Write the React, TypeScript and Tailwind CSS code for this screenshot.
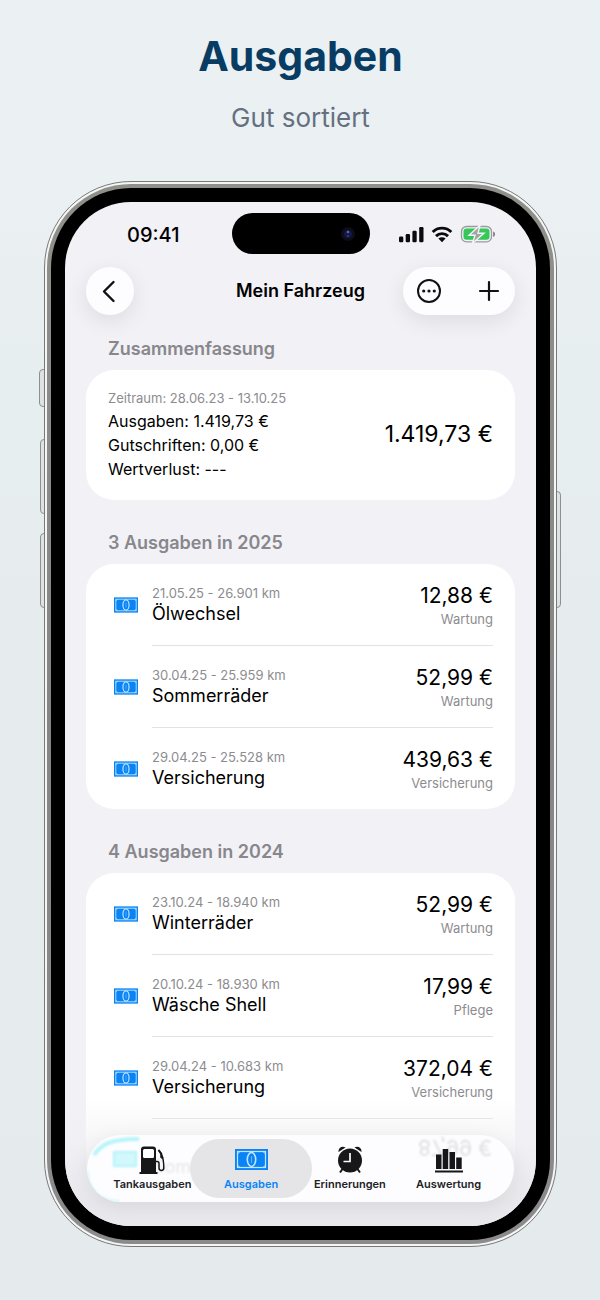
import React from "react";

type Expense = { date: string; title: string; amount: string; category: string };

const groups: { heading: string; items: Expense[] }[] = [
  {
    heading: "3 Ausgaben in 2025",
    items: [
      { date: "21.05.25 - 26.901 km", title: "Ölwechsel", amount: "12,88 €", category: "Wartung" },
      { date: "30.04.25 - 25.959 km", title: "Sommerräder", amount: "52,99 €", category: "Wartung" },
      { date: "29.04.25 - 25.528 km", title: "Versicherung", amount: "439,63 €", category: "Versicherung" },
    ],
  },
  {
    heading: "4 Ausgaben in 2024",
    items: [
      { date: "23.10.24 - 18.940 km", title: "Winterräder", amount: "52,99 €", category: "Wartung" },
      { date: "20.10.24 - 18.930 km", title: "Wäsche Shell", amount: "17,99 €", category: "Pflege" },
      { date: "29.04.24 - 10.683 km", title: "Versicherung", amount: "372,04 €", category: "Versicherung" },
    ],
  },
];

function Banknote({ className }: { className: string }) {
  return (
    <svg viewBox="0 0 33 21" className={className} aria-hidden="true">
      <rect width="33" height="21" fill="#0a84f5" />
      <g fill="none" stroke="#c3e6ff">
        <rect x="2.500" y="2.500" width="28" height="16" strokeWidth="1.200" />
        <path d="M2.500 5 5 2.500M28 2.500 30.500 5M2.500 16 5 18.500M28 18.500l2.500-2.500" strokeWidth="1" />
        <ellipse cx="16.500" cy="10.500" rx="4.200" ry="7" strokeWidth="1.600" />
        <path d="M16.500 7v7" strokeWidth="1.100" stroke="#5db4fb" />
      </g>
    </svg>
  );
}

function Pump() {
  return (
    <svg viewBox="0 0 28 28" className="size-7" aria-hidden="true">
      <path d="M3 3.500A3 3 0 0 1 6 .5h9a3 3 0 0 1 3 3V26h1.500v2H1.500v-2H3Z" fill="#17171a" />
      <rect x="5" y="3" width="11" height="9" rx="1.500" fill="#fdfdff" />
      <path d="M18 15.500h1a2 2 0 0 1 2 2V22a2.400 2.400 0 0 0 4.800 0c0-5-.3-9-2-13l-3.300-5" fill="none" stroke="#17171a" strokeWidth="1.500" />
      <path d="m20.500 4 2.700 3.500v3.500l1.800 1.500" fill="none" stroke="#17171a" strokeWidth="2" />
    </svg>
  );
}

function AlarmClock() {
  return (
    <svg viewBox="0 0 28 28" className="size-7" aria-hidden="true">
      <g fill="#17171a">
        <circle cx="14" cy="14.500" r="12" />
        <path d="M2.500 6C2 2 6-.5 9.500 1.500Z" />
        <path d="M25.500 6C26 2 22-.5 18.500 1.500Z" />
      </g>
      <path d="m6.500 23-2.500 3.500M21.500 23l2.500 3.500" stroke="#17171a" strokeWidth="2" />
      <path d="M14 7v8.500H7.500" fill="none" stroke="#fff" strokeWidth="1.700" />
    </svg>
  );
}

function Bars() {
  return (
    <svg viewBox="0 0 28 28" className="size-7" aria-hidden="true" fill="#17171a">
      <rect x="1" y="8.500" width="5.500" height="14.500" />
      <rect x="7.700" y="3" width="5.500" height="20" />
      <rect x="14.500" y="6" width="5.500" height="17" />
      <rect x="21.200" y="11.500" width="5.500" height="11.500" />
      <rect x="0" y="24.500" width="28" height="2" />
    </svg>
  );
}

function StatusIcons() {
  return (
    <svg viewBox="0 0 98 20" className="h-5 w-[98px]" role="img" aria-label="Empfang, WLAN, Akku lädt">
      <g fill="#0b0b0d">
        <rect x="0" y="11.500" width="4.300" height="5.800" rx="1.200" />
        <rect x="6.700" y="9" width="4.300" height="8.300" rx="1.200" />
        <rect x="13.400" y="5.800" width="4.300" height="11.500" rx="1.200" />
        <rect x="20.200" y="2" width="4.300" height="15.300" rx="1.200" />
        <path d="m43 17.300-3.600-3.700a5.200 5.200 0 0 1 7.200 0Z" />
      </g>
      <g fill="none" stroke="#0b0b0d" strokeWidth="2.900">
        <path d="M33.700 7a13.200 13.200 0 0 1 18.600 0" />
        <path d="M37 11.100a8.500 8.500 0 0 1 12 0" />
      </g>
      <rect x="62.500" y="1.500" width="30" height="15.300" rx="5" fill="none" stroke="#9b9b9f" strokeWidth="1.300" />
      <rect x="64.500" y="3.500" width="26" height="11.300" rx="3" fill="#34c759" />
      <path d="M94.200 6.600c2.400.8 2.400 4.600 0 5.400Z" fill="#77777c" />
      <path d="M81 .3 70 10.300h6l-2.500 8L85 8.300h-6Z" fill="#a4a4a6" stroke="#f5f4f8" strokeWidth="1.400" />
    </svg>
  );
}

function Row({ item, last = false }: { item: Expense; last?: boolean }) {
  return (
    <li className="flex pl-5 pr-[22px]">
      <div className="flex w-[46px] items-center pl-2">
        <Banknote className="h-4 w-6" />
      </div>
      <div className={`flex min-w-0 flex-1 justify-between border-[#e2e2e5] pb-[15px] pt-5 ${last ? "" : "border-b"}`}>
        <div>
          <p className="text-[13px] leading-[18px] text-[#8c8c90]">{item.date}</p>
          <p className="text-[18px] leading-6">{item.title}</p>
        </div>
        <div className="text-right">
          <p className="text-[21px] leading-6">{item.amount}</p>
          <p className="text-[13px] leading-[22px] text-[#8c8c90]">{item.category}</p>
        </div>
      </div>
    </li>
  );
}

function Tab({ label, icon, active = false }: { label: string; icon: React.ReactNode; active?: boolean }) {
  return (
    <button
      type="button"
      aria-pressed={active}
      className={`flex flex-1 flex-col items-center pb-2 pt-2 text-[11px] font-semibold leading-4 ${active ? "text-[#0a84f5]" : "text-[#222226]"}`}
    >
      <span className="flex h-7 items-center">{icon}</span>
      <span className="mt-0.5">{label}</span>
    </button>
  );
}

export default function App() {
  return (
    <main className="min-h-screen bg-[linear-gradient(180deg,#ebf0f3_0%,#ebf0f3_15%,#e7eeef_30%,#e6ebee_60%,#e5eaed_100%)] pb-[54px] pl-11 pr-[43px] pt-8 font-[Inter,'Liberation_Sans',sans-serif] text-black">
      <header className="text-center">
        <h1 className="text-[41px] font-bold leading-[48px] text-[#083c62]">Ausgaben</h1>
        <p className="mt-5 text-[26px] leading-9 text-[#647080]">Gut sortiert</p>
      </header>

      <div className="relative mt-[45px]">
        <div className="absolute -left-[5px] top-[188px] h-[38px] w-2 rounded-l-sm border border-[#8d9091] bg-[#dfe2e3]" />
        <div className="absolute -left-[4px] top-[258px] h-[75px] w-2 rounded-l-sm border border-[#8d9091] bg-[#dfe2e3]" />
        <div className="absolute -left-[4px] top-[352px] h-[75px] w-2 rounded-l-sm border border-[#8d9091] bg-[#dfe2e3]" />
        <div className="absolute -right-[4px] top-[310px] h-[117px] w-2 rounded-r-sm border border-[#8d9091] bg-[#dfe2e3]" />

        <div className="relative rounded-[87px] border border-[#77797a] bg-[#f5f5f5] p-0.5">
          <div className="rounded-[84px] bg-[linear-gradient(180deg,#8f8f8c,#858585_50%,#8b8b8b)] p-1">
            <div className="rounded-[80px] bg-black p-3.5">
              <div className="relative overflow-hidden rounded-[66px] bg-[#f2f1f6] px-[21px] pb-[25px]">
                <div className="flex h-[65px] items-center justify-between pl-[41px] pr-[18px]">
                  <span className="text-[20px] font-medium leading-6">09:41</span>
                  <StatusIcons />
                </div>
                <div className="absolute left-1/2 top-[11px] flex h-[41px] w-[138px] -translate-x-1/2 items-center justify-end rounded-full bg-black pr-[15px]">
                  <svg viewBox="0 0 14 14" className="size-3.5" aria-hidden="true">
                    <circle cx="7" cy="7" r="7" fill="#0c0d16" />
                    <circle cx="7" cy="7" r="4" fill="#151845" />
                    <circle cx="7" cy="5" r="1.300" fill="#5a64ad" />
                    <circle cx="7" cy="9" r="1" fill="#343da0" />
                  </svg>
                </div>

                <nav className="relative flex items-center justify-between" aria-label="Navigation">
                  <button type="button" aria-label="Zurück" className="flex size-12 items-center justify-center rounded-full bg-[#fdfdff] shadow-[0_6px_22px_rgba(0,0,0,0.09)]">
                    <svg viewBox="0 0 24 24" className="size-6" fill="none" stroke="#111114" strokeWidth="2.400" strokeLinecap="round" strokeLinejoin="round" aria-hidden="true">
                      <path d="M15.500 3 6 12.500l9.500 9.500" />
                    </svg>
                  </button>
                  <h2 className="absolute left-1/2 -translate-x-1/2 whitespace-nowrap text-[18px] font-semibold leading-6">Mein Fahrzeug</h2>
                  <div className="flex h-12 w-28 items-center justify-between rounded-full bg-[#fdfdff] px-3.5 shadow-[0_6px_22px_rgba(0,0,0,0.09)]">
                    <button type="button" aria-label="Mehr">
                      <svg viewBox="0 0 24 24" className="size-6" fill="none" stroke="#111114" strokeWidth="2" aria-hidden="true">
                        <circle cx="12" cy="12" r="11" />
                        <g fill="#111114" stroke="none">
                          <circle cx="6.700" cy="12" r="1.600" />
                          <circle cx="12" cy="12" r="1.600" />
                          <circle cx="17.300" cy="12" r="1.600" />
                        </g>
                      </svg>
                    </button>
                    <button type="button" aria-label="Hinzufügen">
                      <svg viewBox="0 0 24 24" className="size-6" fill="none" stroke="#111114" strokeWidth="2.200" strokeLinecap="round" aria-hidden="true">
                        <path d="M12 3v18M3 12h18" />
                      </svg>
                    </button>
                  </div>
                </nav>

                <section>
                  <h3 className="px-[22px] pb-[9px] pt-[22px] text-[18px] font-semibold leading-6 text-[#87878c]">Zusammenfassung</h3>
                  <div className="flex items-center justify-between rounded-[28px] bg-white px-[22px] pb-[19px] pt-[17px]">
                    <div className="text-[16px] leading-6">
                      <p className="text-[13px] leading-[22px] text-[#8c8c90]">Zeitraum: 28.06.23 - 13.10.25</p>
                      <p>Ausgaben: 1.419,73 €</p>
                      <p>Gutschriften: 0,00 €</p>
                      <p>Wertverlust: ---</p>
                    </div>
                    <p className="text-[23px] leading-8">1.419,73 €</p>
                  </div>
                </section>

                {groups.map((group, index) => (
                  <section key={group.heading}>
                    <h3 className="px-[22px] pb-[9px] pt-[31px] text-[18px] font-semibold leading-6 text-[#87878c]">{group.heading}</h3>
                    <ul className="rounded-[28px] bg-white">
                      {group.items.map((item, i) => (
                        <Row key={item.date} item={item} last={index === 0 && i === group.items.length - 1} />
                      ))}
                      {index === 1 && <li className="h-[82px]" />}
                    </ul>
                  </section>
                ))}

                <div className="absolute inset-x-0 bottom-0 h-32 bg-[linear-gradient(180deg,rgba(232,231,236,0)_0%,rgba(240,240,243,0.6)_35%,#e9e8ed_80%)]" />
                <div className="absolute inset-x-[22px] bottom-6 h-[67px] overflow-hidden rounded-full bg-[#fdfdff] shadow-[0_4px_20px_rgba(0,0,0,0.08)]">
                  <div className="absolute inset-0 blur-[1px]" aria-hidden="true">
                    <svg viewBox="0 0 60 67" className="absolute left-0 top-0 h-[67px] w-[60px]" fill="none" stroke="#b4f4fa">
                      <path d="M7 20C14 9 24 4 52 4" strokeWidth="4" />
                      <path d="M1 36c0 16 12 30 32 30" strokeWidth="1" />
                    </svg>
                    <div className="absolute left-[26px] top-4 h-4 w-6 border-2 border-[#b4f4fa] bg-[#d2f8fc]" />
                    <span className="absolute left-[66px] top-5 text-[18px] leading-6 text-[#e6e6e9]">Sommerräder</span>
                    <span className="absolute right-[22px] top-0 -scale-y-100 text-[21px] leading-6 text-[#dedee1]">87,99 €</span>
                  </div>
                  <div className="absolute inset-y-1 left-[103px] w-[122px] rounded-full bg-[#e5e5e8]" />
                  <div className="relative flex h-full items-center px-4">
                    <Tab label="Tankausgaben" icon={<Pump />} />
                    <Tab label="Ausgaben" icon={<Banknote className="h-[21px] w-[33px]" />} active />
                    <Tab label="Erinnerungen" icon={<AlarmClock />} />
                    <Tab label="Auswertung" icon={<Bars />} />
                  </div>
                </div>
              </div>
            </div>
          </div>
        </div>
      </div>
    </main>
  );
}
